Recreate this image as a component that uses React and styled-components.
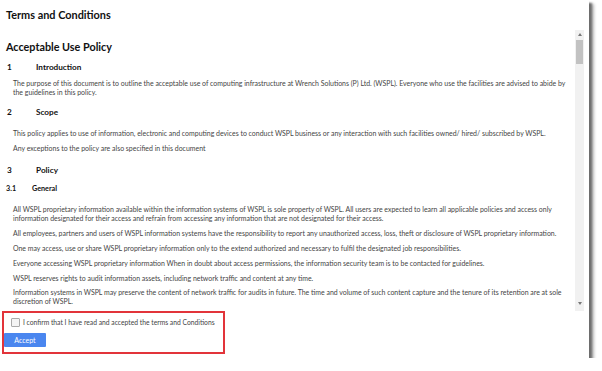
import React from 'react'
import styled, { createGlobalStyle } from 'styled-components'

const GlobalStyle = createGlobalStyle`
  body {
    margin: 0;
    background: #fff;
    font-family: Lato, "Open Sans", sans-serif;
  }
`

const Frame = styled.div`
  width: 589px;
  height: 358px;
  background: #fff;
  box-shadow: 3px 3px 2px #6d6d6d, 5px 4px 3px #bdbdbd;
  display: flex;
  flex-direction: column;
`

const Title = styled.h2`
  margin: 0;
  height: 30px;
  line-height: 30px;
  padding-left: 6px;
  font-size: 10.9px;
  font-weight: 700;
  color: #111;
`

const Body = styled.div`
  display: flex;
  height: 281px;
  margin-right: 5px;
`

const Doc = styled.div`
  flex: 1;
  overflow: hidden;
  padding: 10px 6px 0 6px;
`

const Rail = styled.div`
  width: 9px;
  background: #f1f1f1;
  display: flex;
  flex-direction: column;
  align-items: center;
`

const Arrow = styled.div`
  height: 9px;
  display: flex;
  align-items: center;
  justify-content: center;
  margin-top: ${p => (p.$down ? 'auto' : '0')};
  margin-bottom: ${p => (p.$down ? '3px' : '0')};

  &::before {
    content: '';
    width: 0;
    height: 0;
    border-left: 2.5px solid transparent;
    border-right: 2.5px solid transparent;
    border-${p => (p.$down ? 'top' : 'bottom')}: 3px solid #777;
  }
`

const Thumb = styled.div`
  width: 7px;
  height: 24px;
  margin-top: 1px;
  background: #c2c2c2;
`

const PolicyName = styled.h1`
  margin: 0;
  font-size: 10.8px;
  line-height: 14px;
  font-weight: 700;
  color: #111;
`

const Heading = styled.h3`
  margin: ${p => p.$top}px 0 0;
  display: grid;
  grid-template-columns: ${p => (p.$sub ? 26 : 29)}px 1fr;
  padding-left: ${p => (p.$sub ? 0 : 1)}px;
  font-size: ${p => (p.$sub ? 7.2 : 8.2)}px;
  line-height: 10px;
  font-weight: 700;
  color: #111;
`

const Para = styled.p`
  margin: ${p => p.$top}px 0 0;
  padding-left: 7px;
  font-size: 6.95px;
  line-height: 9px;
  color: #444;
  white-space: nowrap;
`

const Footer = styled.div`
  flex: 1;
  padding-left: 2px;
`

const Highlight = styled.div`
  width: 219px;
  height: 39px;
  border: 2px solid #e2343a;
  display: flex;
  flex-direction: column;
  align-items: flex-start;
`

const Confirm = styled.label`
  display: flex;
  align-items: center;
  gap: 3px;
  height: 18px;
  line-height: 10px;
  padding-left: 7px;
  font-size: 6.75px;
  color: #444;
  white-space: nowrap;
`

const Box = styled.span`
  width: 7px;
  height: 7px;
  border: 1px solid #aaa;
  border-radius: 1px;
  background: #f4f4f4;
`

const Button = styled.button`
  width: 42px;
  height: 14px;
  margin-top: 2px;
  padding: 0;
  border: none;
  border-radius: 1px;
  background: #4a86ef;
  color: #fff;
  font-family: inherit;
  font-size: 7px;
  line-height: 14px;
`

const sections = [
  { type: 'h', num: '1', text: 'Introduction', top: 8 },
  {
    type: 'p',
    top: 7,
    lines: [
      'The purpose of this document is to outline the acceptable use of computing infrastructure at Wrench Solutions (P) Ltd. (WSPL). Everyone who use the facilities are advised to abide by',
      'the guidelines in this policy.',
    ],
  },
  { type: 'h', num: '2', text: 'Scope', top: 10 },
  {
    type: 'p',
    top: 12,
    lines: ['This policy applies to use of information, electronic and computing devices to conduct WSPL business or any interaction with such facilities owned/ hired/ subscribed by WSPL.'],
  },
  { type: 'p', top: 6, lines: ['Any exceptions to the policy are also specified in this document'] },
  { type: 'h', num: '3', text: 'Policy', top: 12 },
  { type: 'h', num: '3.1', text: 'General', top: 9, sub: true },
  {
    type: 'p',
    top: 11,
    lines: [
      'All WSPL proprietary information available within the information systems of WSPL is sole property of WSPL. All users are expected to learn all applicable policies and access only',
      'information designated for their access and refrain from accessing any information that are not designated for their access.',
    ],
  },
  {
    type: 'p',
    top: 6,
    lines: ['All employees, partners and users of WSPL information systems have the responsibility to report any unauthorized access, loss, theft or disclosure of WSPL proprietary information.'],
  },
  { type: 'p', top: 6, lines: ['One may access, use or share WSPL proprietary information only to the extend authorized and necessary to fulfil the designated job responsibilities.'] },
  { type: 'p', top: 6, lines: ['Everyone accessing WSPL proprietary information When in doubt about access permissions, the information security team is to be contacted for guidelines.'] },
  { type: 'p', top: 6, lines: ['WSPL reserves rights to audit information assets, including network traffic and content at any time.'] },
  {
    type: 'p',
    top: 5,
    lines: [
      'Information systems in WSPL may preserve the content of network traffic for audits in future. The time and volume of such content capture and the tenure of its retention are at sole',
      'discretion of WSPL.',
    ],
  },
  { type: 'h', num: '3.2', text: 'Security and Proprietary Information', top: 10, sub: true },
  { type: 'p', top: 10, lines: ['All mobile and computing devices that connect to the internal network must comply with the minimum access policy.'] },
]

class App extends React.Component {
  state = {
    aceito: false,
  }

  onToggle = () => {
    this.setState({ aceito: !this.state.aceito })
  }

  render() {
    const conteudo = sections.map((item, i) => {
      if (item.type === 'h') {
        return (
          <Heading key={i} $top={item.top} $sub={item.sub}>
            <span>{item.num}</span>
            <span>{item.text}</span>
          </Heading>
        )
      }
      return (
        <Para key={i} $top={item.top}>
          {item.lines.map((l, j) => (
            <React.Fragment key={j}>
              {j > 0 && <br />}
              {l}
            </React.Fragment>
          ))}
        </Para>
      )
    })

    return (
      <>
        <GlobalStyle />
        <Frame>
          <Title>Terms and Conditions</Title>
          <Body>
            <Doc>
              <PolicyName>Acceptable Use Policy</PolicyName>
              {conteudo}
            </Doc>
            <Rail>
              <Arrow />
              <Thumb />
              <Arrow $down />
            </Rail>
          </Body>
          <Footer>
            <Highlight>
              <Confirm onClick={this.onToggle}>
                <Box />
                I confirm that I have read and accepted the terms and Conditions
              </Confirm>
              <Button>Accept</Button>
            </Highlight>
          </Footer>
        </Frame>
      </>
    )
  }
}

export default App
